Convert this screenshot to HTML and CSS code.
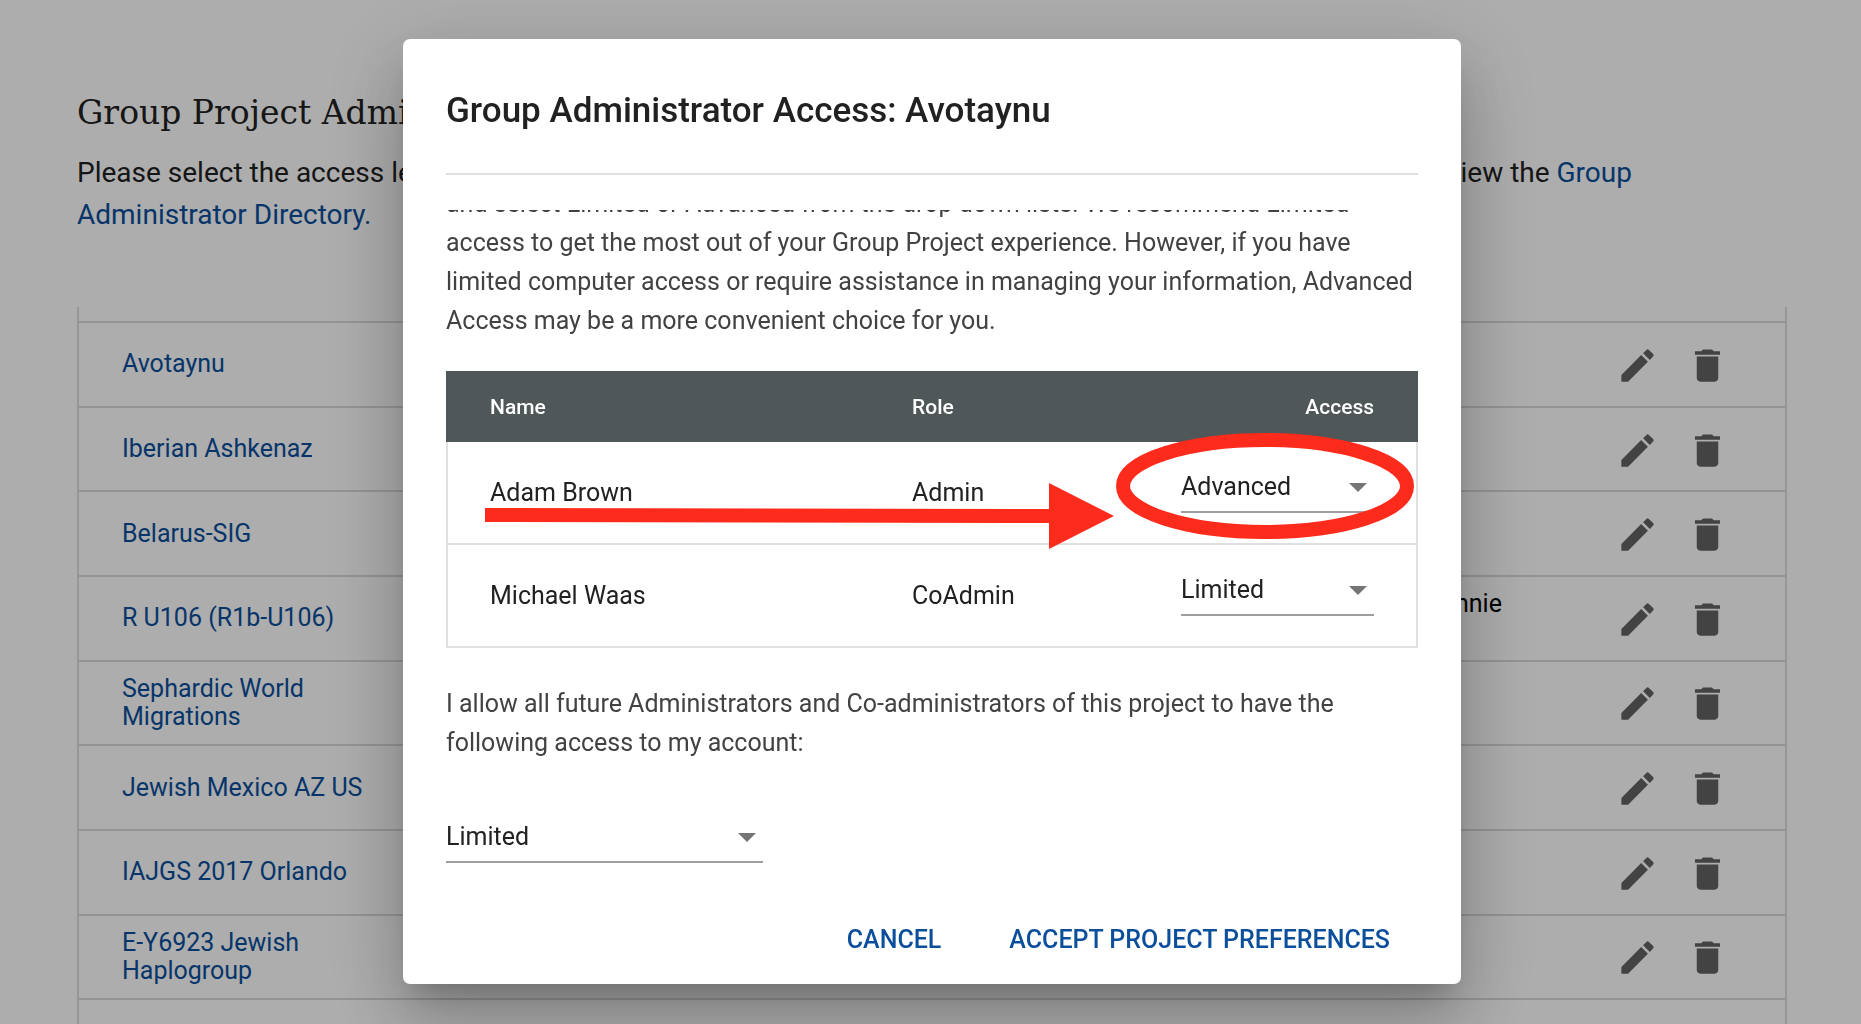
FILE: index.html
```html
<!DOCTYPE html>
<html lang="en">
<head>
<meta charset="utf-8">
<title>Group Project Administrators</title>
<link rel="stylesheet" href="styles.css">
</head>
<body>
<svg class="sprite" aria-hidden="true">
  <symbol id="edit" viewBox="0 0 24 24"><path d="M3 17.25V21h3.75L17.81 9.94l-3.75-3.75L3 17.25zM20.71 7.04c.39-.39.39-1.02 0-1.41l-2.34-2.34c-.39-.39-1.02-.39-1.41 0l-1.83 1.83 3.75 3.75 1.83-1.83z"/></symbol>
  <symbol id="delete" viewBox="0 0 24 24"><path d="M6 19c0 1.1.9 2 2 2h8c1.1 0 2-.9 2-2V7H6v12zM19 4h-3.5l-1-1h-5l-1 1H5v2h14V4z"/></symbol>
</svg>

<main class="page">
  <h1 class="page-title">Group Project Administrators</h1>
  <p class="intro">Please select the access levels you would like to give the administrators of your group projects. To learn more, view the <a href="#">Group Administrator Directory.</a></p>

  <table class="projects">
    <tbody>
      <tr class="stub"><td></td><td></td><td></td></tr>
      <tr><td class="project"><a href="#">Avotaynu</a></td><td></td><td class="tools"><div class="tool-row"><button class="icon-button" aria-label="Edit Avotaynu"><svg><use href="#edit"/></svg></button><button class="icon-button" aria-label="Delete Avotaynu"><svg><use href="#delete"/></svg></button></div></td></tr>
      <tr><td class="project"><a href="#">Iberian Ashkenaz</a></td><td></td><td class="tools"><div class="tool-row"><button class="icon-button" aria-label="Edit Iberian Ashkenaz"><svg><use href="#edit"/></svg></button><button class="icon-button" aria-label="Delete Iberian Ashkenaz"><svg><use href="#delete"/></svg></button></div></td></tr>
      <tr><td class="project"><a href="#">Belarus-SIG</a></td><td></td><td class="tools"><div class="tool-row"><button class="icon-button" aria-label="Edit Belarus-SIG"><svg><use href="#edit"/></svg></button><button class="icon-button" aria-label="Delete Belarus-SIG"><svg><use href="#delete"/></svg></button></div></td></tr>
      <tr><td class="project"><a href="#">R U106 (R1b-U106)</a></td><td class="people">Raymond Wing, Bonnie Schrack</td><td class="tools"><div class="tool-row"><button class="icon-button" aria-label="Edit R U106"><svg><use href="#edit"/></svg></button><button class="icon-button" aria-label="Delete R U106"><svg><use href="#delete"/></svg></button></div></td></tr>
      <tr><td class="project"><a href="#">Sephardic World Migrations</a></td><td></td><td class="tools"><div class="tool-row"><button class="icon-button" aria-label="Edit Sephardic World Migrations"><svg><use href="#edit"/></svg></button><button class="icon-button" aria-label="Delete Sephardic World Migrations"><svg><use href="#delete"/></svg></button></div></td></tr>
      <tr><td class="project"><a href="#">Jewish Mexico AZ US</a></td><td></td><td class="tools"><div class="tool-row"><button class="icon-button" aria-label="Edit Jewish Mexico AZ US"><svg><use href="#edit"/></svg></button><button class="icon-button" aria-label="Delete Jewish Mexico AZ US"><svg><use href="#delete"/></svg></button></div></td></tr>
      <tr><td class="project"><a href="#">IAJGS 2017 Orlando</a></td><td></td><td class="tools"><div class="tool-row"><button class="icon-button" aria-label="Edit IAJGS 2017 Orlando"><svg><use href="#edit"/></svg></button><button class="icon-button" aria-label="Delete IAJGS 2017 Orlando"><svg><use href="#delete"/></svg></button></div></td></tr>
      <tr><td class="project"><a href="#">E-Y6923 Jewish Haplogroup</a></td><td></td><td class="tools"><div class="tool-row"><button class="icon-button" aria-label="Edit E-Y6923 Jewish Haplogroup"><svg><use href="#edit"/></svg></button><button class="icon-button" aria-label="Delete E-Y6923 Jewish Haplogroup"><svg><use href="#delete"/></svg></button></div></td></tr>
      <tr><td></td><td></td><td></td></tr>
    </tbody>
  </table>
</main>

<div class="backdrop">
  <section class="dialog" role="dialog" aria-modal="true" aria-labelledby="dialog-title">
    <h2 class="dialog-title" id="dialog-title">Group Administrator Access: Avotaynu</h2>
    <div class="dialog-body">
      <p>and select Limited or Advanced from the drop down lists. We recommend Limited access to get the most out of your Group Project experience. However, if you have limited computer access or require assistance in managing your information, Advanced Access may be a more convenient choice for you.</p>
      <table class="access">
        <thead>
          <tr><th>Name</th><th>Role</th><th class="end">Access</th></tr>
        </thead>
        <tbody>
          <tr>
            <td>Adam Brown</td><td>Admin</td>
            <td><div class="select"><select aria-label="Access for Adam Brown"><option>Limited</option><option selected>Advanced</option></select></div></td>
          </tr>
          <tr>
            <td>Michael Waas</td><td>CoAdmin</td>
            <td><div class="select"><select aria-label="Access for Michael Waas"><option selected>Limited</option><option>Advanced</option></select></div></td>
          </tr>
        </tbody>
      </table>
      <p><label for="future">I allow all future Administrators and Co-administrators of this project to have the following access to my account:</label></p>
      <div class="select future"><select id="future"><option selected>Limited</option><option>Advanced</option></select></div>
    </div>
    <div class="actions">
      <button class="text-button">CANCEL</button>
      <button class="text-button">ACCEPT PROJECT PREFERENCES</button>
    </div>
    <svg class="callout" viewBox="0 0 932 118" aria-hidden="true">
      <path d="M1 76 565 77V51L630 84 565 117V91L1 90Z"/>
      <ellipse cx="781" cy="54" rx="142" ry="46"/>
    </svg>
  </section>
</div>
</body>
</html>
```
FILE: styles.css
```css
* { box-sizing: border-box; }

body {
  margin: 0;
  height: 100vh;
  overflow: hidden;
  background: #fff;
  color: #212121;
  font-family: Roboto, "Liberation Sans", sans-serif;
  font-size: 25px;
  line-height: 28px;
}

h1, h2, p { margin: 0; }
a { color: #0b4f9c; text-decoration: none; }
button, select { font: inherit; border: 0; background: none; cursor: pointer; }
.sprite { display: none; }

/* Page behind the dialog */
.page {
  height: 100vh;
  padding: 89px 74px 0 77px;
  overflow: hidden;
}

.page-title {
  margin-bottom: 15px;
  font: 400 33px/48px "Roboto Slab", "DejaVu Serif", serif;
  white-space: nowrap;
}

.intro {
  max-width: 1600px;
  margin-bottom: 71px;
  font-size: 28px;
  line-height: 42px;
}

.projects {
  width: 100%;
  height: 778px;
  border: solid #dedede;
  border-width: 0 2px;
  border-spacing: 0;
  table-layout: fixed;
}
.projects td { height: 84px; padding: 0 0 0 43px; border-bottom: 2px solid #dadada; }
.projects .stub td { height: 16px; }
.projects td:first-child { width: 315px; }
.projects td:last-child { width: 272px; }
.projects .people { padding-left: 853px; color: #000; }
.projects .tools { padding: 2px 56px 0 0; }
.tool-row { display: flex; justify-content: flex-end; gap: 27px; }
.icon-button { padding: 0; }
.icon-button svg { display: block; width: 43px; height: 43px; fill: #646464; }

/* Dialog */
.backdrop {
  position: fixed;
  inset: 0;
  display: flex;
  justify-content: center;
  padding: 39px 0 40px 3px;
  background: rgba(0, 0, 0, .32);
}

.dialog {
  position: relative;
  display: flex;
  flex-direction: column;
  width: 1058px;
  max-width: 90%;
  padding: 43px 43px 25px;
  border-radius: 7px;
  background: #fff;
  box-shadow: 0 20px 27px -12px rgba(0, 0, 0, .2), 0 43px 68px 5px rgba(0, 0, 0, .14), 0 16px 82px 14px rgba(0, 0, 0, .12);
}

.dialog-title {
  padding: 5px 0 38px;
  border-bottom: 2px solid #e0e0e0;
  font-size: 35px;
  font-weight: 500;
  line-height: 48px;
}

/* Scrolled to its end: the overflow is hidden above the top edge */
.dialog-body {
  display: flex;
  flex: 1;
  flex-direction: column;
  justify-content: flex-end;
  min-height: 0;
  margin-top: 35px;
  padding-bottom: 58px;
  overflow: hidden;
}
.dialog-body p { color: #424242; line-height: 39px; }

.access {
  width: 100%;
  margin: 31px 0 36px;
  border-spacing: 0;
}
.access th {
  height: 71px;
  padding: 0 44px;
  background: #4f5759;
  color: #fff;
  font-size: 21px;
  font-weight: 500;
  text-align: left;
}
.access .end { text-align: right; }
.access td {
  height: 103px;
  padding: 0 44px;
  border-bottom: 2px solid #e0e0e0;
}
.access td:first-child { padding-left: 42px; border-left: 2px solid #e0e0e0; }
.access td:last-child { padding: 0 42px 7px 44px; border-right: 2px solid #e0e0e0; }
.access th:first-child { width: 422px; }
.access th:last-child { width: 281px; }

.select { position: relative; border-bottom: 2px solid #9e9e9e; }
.select select {
  display: block;
  width: 100%;
  height: 46px;
  padding: 0 0 2px;
  appearance: none;
  color: #212121;
}
.select::after {
  content: "";
  position: absolute;
  top: 18px;
  right: 7px;
  border: solid transparent;
  border-width: 9px 9px 0;
  border-top-color: #757575;
  pointer-events: none;
}
.future { flex: none; width: 317px; margin-top: 53px; }

.actions { display: flex; justify-content: flex-end; gap: 12px; }
.text-button { padding: 0 28px; color: #0b4f9c; font-weight: 500; line-height: 38px; }

/* Red arrow and ring drawn over the first row */
.callout {
  position: absolute;
  top: 393px;
  left: 81px;
  width: 932px;
  height: 118px;
  pointer-events: none;
}
.callout path { fill: #fd2b1c; }
.callout ellipse { fill: none; stroke: #fd2b1c; stroke-width: 14px; }
```
